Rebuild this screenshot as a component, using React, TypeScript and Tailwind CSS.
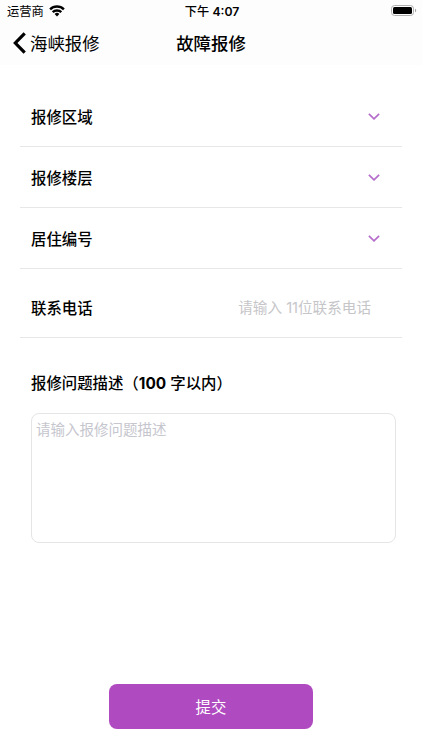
import { useState } from "react";

const SELECT_FIELDS = ["报修区域", "报修楼层", "居住编号"];

// ─── Icons ────────────────────────────────────────────────────────────────────
function WifiIcon() {
  return (
    <svg className="mb-px h-3 w-4" viewBox="0 0 16 12" fill="none" stroke="#000" strokeWidth="2.4">
      <path d="M1.100 4.300a9.800 9.800 0 0 1 13.800 0" />
      <path d="M3.700 7.200a6.100 6.100 0 0 1 8.600 0" />
      <path d="M5.600 9a3.400 3.400 0 0 1 4.800 0L8 11.400z" fill="#000" stroke="none" />
    </svg>
  );
}

function BatteryIcon() {
  return (
    <svg className="mb-0.5 h-[11px] w-[26px]" viewBox="0 0 26 11">
      <rect x="0.5" y="0.5" width="22" height="10" rx="3" fill="none" stroke="#b0b0b0" />
      <rect x="2" y="2" width="19" height="7" rx="1.5" fill="#000" />
      <path d="M24 3.700v3.600c.8-.3 1.200-1 1.200-1.800s-.4-1.500-1.200-1.800z" fill="#a0a0a0" />
    </svg>
  );
}

function BackIcon() {
  return (
    <svg className="h-[22px] w-[13px]" viewBox="0 0 13 22" fill="none" stroke="#000" strokeWidth="3.2">
      <path d="M11.700 1.300 2.300 11l9.400 9.700" />
    </svg>
  );
}

function ChevronDown() {
  return (
    <svg className="h-[7px] w-3" viewBox="0 0 12 7" fill="none" stroke="#b56ccb" strokeWidth="1.7">
      <path d="M.9.900 6 5.800 11.100.900" />
    </svg>
  );
}

// ─── Page ─────────────────────────────────────────────────────────────────────
export default function App() {
  const [phone, setPhone] = useState("");
  const [detail, setDetail] = useState("");

  return (
    <div className="flex h-[750px] w-[422px] flex-col overflow-hidden bg-white font-['Inter','Noto_Sans_CJK_SC',sans-serif] text-black">
      <header className="h-[65px] shrink-0 bg-[#fdfdfd]">
        <div className="grid h-[22px] grid-cols-3 items-center pl-[7px] pr-[5px] text-[12px] leading-[22px]">
          <div className="flex items-center gap-[5px]">
            <span className="pt-px text-[12.3px]">运营商</span>
            <WifiIcon />
          </div>
          <span className="text-center text-[12.2px] font-medium">
            下午 <span className="font-semibold">4:07</span>
          </span>
          <div className="flex justify-end">
            <BatteryIcon />
          </div>
        </div>
        <nav className="grid h-[43px] grid-cols-[1fr_auto_1fr] items-center pl-[13px] pr-[13px] text-[17.4px]">
          <button className="flex items-center gap-1">
            <BackIcon />
            <span className="pt-0.5">海峡报修</span>
          </button>
          <h1 className="pt-0.5 font-medium">故障报修</h1>
          <span />
        </nav>
      </header>

      <main className="flex flex-1 flex-col pt-[21px] text-[15.4px]">
        {SELECT_FIELDS.map((label) => (
          <button
            key={label}
            className="ml-[20px] flex h-[61px] w-[382px] items-center justify-between border-b border-[#e7e7e7] pl-[11px] pr-[22px]"
          >
            <span className="pt-[3px] font-medium">{label}</span>
            <ChevronDown />
          </button>
        ))}

        <label className="ml-[20px] flex h-[69px] w-[382px] items-center justify-between border-b border-[#e7e7e7] pl-[11px] pr-[31px] pt-[8px]">
          <span className="pt-[3px] font-medium">联系电话</span>
          <input
            value={phone}
            onChange={(e) => setPhone(e.target.value)}
            placeholder="请输入 11位联系电话"
            className="w-[200px] pt-1 text-right text-[14.6px] outline-none placeholder:text-[#c6c6c9]"
          />
        </label>

        <h2 className="ml-[31px] mt-[34px] leading-6 font-medium">
          报修问题描述（<span className="font-bold">100</span> 字以内）
        </h2>
        <textarea
          value={detail}
          onChange={(e) => setDetail(e.target.value)}
          placeholder="请输入报修问题描述"
          className="ml-[31px] mt-[17px] h-[130px] w-[365px] resize-none rounded-lg border border-[#e5e5e5] px-[4px] pt-[5px] text-[14.5px] leading-[22px] outline-none placeholder:text-[#c6c6ce]"
        />

        <button className="ml-[109px] mt-[141px] h-[45px] w-[204px] rounded-lg bg-[#b04ac0] pt-0.5 text-[15.4px] text-white">
          提交
        </button>
      </main>
    </div>
  );
}
